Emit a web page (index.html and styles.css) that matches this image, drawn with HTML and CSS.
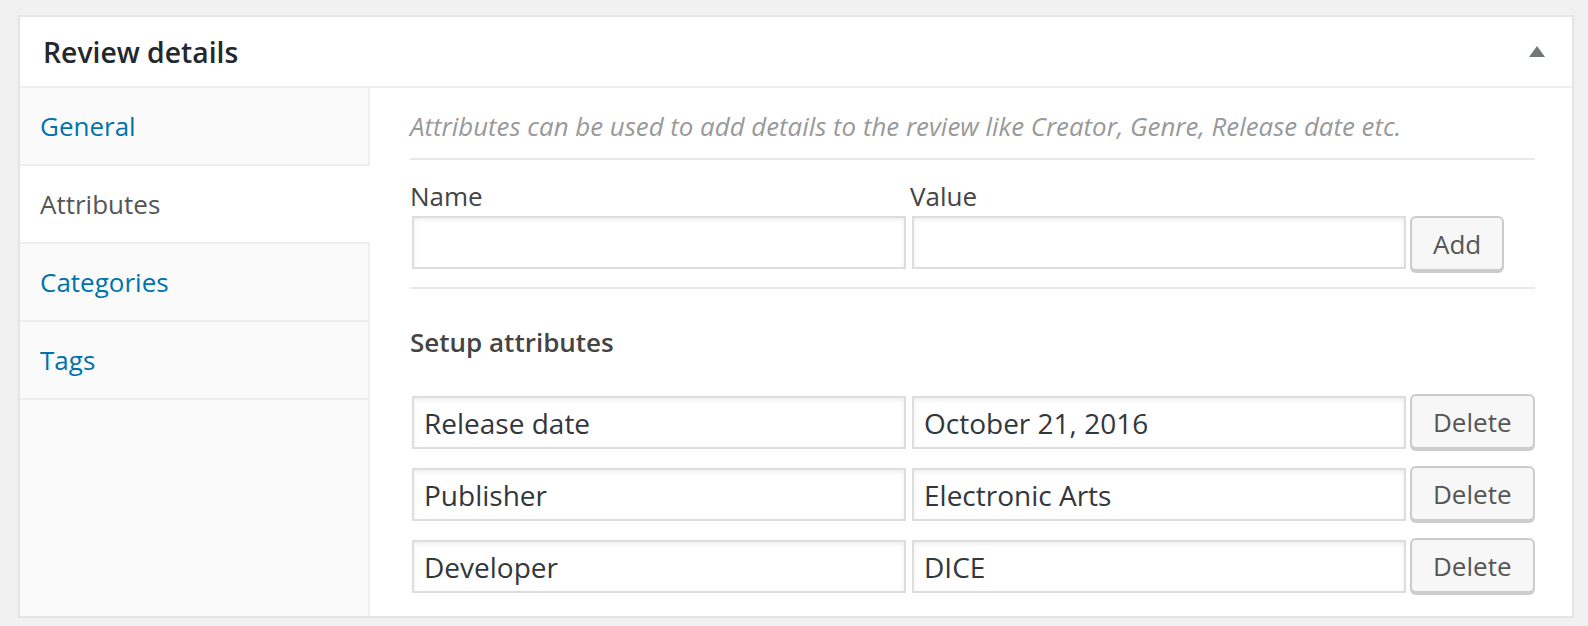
FILE: index.html
```html
<!DOCTYPE html>
<html lang="en">
<head>
<meta charset="utf-8">
<title>Review details</title>
<link rel="stylesheet" href="styles.css">
</head>
<body>
<div class="postbox">
  <div class="hndle">
    <h2>Review details</h2>
    <svg class="toggle" width="16" height="11" viewBox="0 0 16 11"><polygon points="8,0 16,11 0,11" fill="#72777c"/></svg>
  </div>
  <div class="inside">
    <ul class="tabs">
      <li class="tab">General</li>
      <li class="tab active">Attributes</li>
      <li class="tab">Categories</li>
      <li class="tab">Tags</li>
    </ul>
    <div class="content">
      <p class="description">Attributes can be used to add details to the review like Creator, Genre, Release date etc.</p>
      <div class="sep"></div>
      <div class="labels">
        <span class="label label-name">Name</span>
        <span class="label">Value</span>
      </div>
      <div class="row row-new">
        <input class="field field-name" type="text" value="">
        <input class="field field-value" type="text" value="">
        <button class="btn">Add</button>
      </div>
      <div class="sep sep-lower"></div>
      <h3 class="setup-title">Setup attributes</h3>
      <div class="row row-first">
        <input class="field field-name" type="text" value="Release date">
        <input class="field field-value" type="text" value="October 21, 2016">
        <button class="btn">Delete</button>
      </div>
      <div class="row">
        <input class="field field-name" type="text" value="Publisher">
        <input class="field field-value" type="text" value="Electronic Arts">
        <button class="btn">Delete</button>
      </div>
      <div class="row">
        <input class="field field-name" type="text" value="Developer">
        <input class="field field-value" type="text" value="DICE">
        <button class="btn">Delete</button>
      </div>
    </div>
  </div>
</div>
</body>
</html>
```
FILE: styles.css
```css
html, body {
  margin: 0;
  padding: 0;
  background: #f1f1f1;
  font-family: "Open Sans", "Noto Sans", sans-serif;
}

.postbox {
  margin: 15px 0 0 18px;
  width: 1556px;
  box-sizing: border-box;
  border: 2px solid #e5e5e5;
  background: #fff;
  box-shadow: 0 2px 2px rgba(0, 0, 0, 0.04);
}

.hndle {
  height: 69px;
  border-bottom: 2px solid #eee;
  display: flex;
  align-items: center;
  justify-content: space-between;
  padding: 0 27px 0 23px;
}

.hndle h2 {
  margin: 0;
  font-size: 28.3px;
  font-weight: 600;
  color: #23282d;
  line-height: 40px;
}

.toggle {
  display: block;
}

.inside {
  display: flex;
}

.tabs {
  list-style: none;
  margin: 0;
  padding: 0;
  width: 350px;
  flex: none;
  background: #fafafa;
  box-shadow: inset -2px 0 0 #eee;
}

.tab {
  height: 76px;
  border-bottom: 2px solid #eee;
  display: flex;
  align-items: center;
  padding-left: 20px;
  font-size: 26px;
  color: #0073aa;
}

.tab.active {
  background: #fff;
  color: #555;
}

.content {
  flex: 1;
  padding: 18px 40px 23px 40px;
}

.description {
  margin: 0;
  font-size: 25.85px;
  line-height: 40px;
  font-style: italic;
  color: #999;
}

.sep {
  height: 2px;
  background: #e8e8e8;
  margin-top: 12px;
}

.sep-lower {
  margin-top: 16px;
}

.labels {
  display: flex;
  margin-top: 16px;
  font-size: 26px;
  line-height: 40px;
  color: #444;
}

.label-name {
  width: 500px;
}

.row {
  display: flex;
  align-items: flex-end;
  padding-left: 2px;
  margin-top: 17px;
}

.row-new {
  align-items: flex-start;
  margin-top: 0;
}

.row-first {
  margin-top: 32px;
}

.field {
  width: 494px;
  height: 53px;
  box-sizing: border-box;
  border: 2px solid #ddd;
  box-shadow: inset 0 2px 4px rgba(0, 0, 0, 0.07);
  background: #fff;
  padding: 0 10px;
  margin: 0 6px 0 0;
  font-family: "Open Sans", "Noto Sans", sans-serif;
  font-size: 28px;
  color: #32373c;
  outline: none;
  border-radius: 0;
}

.field-value {
  margin-right: 4px;
}

.btn {
  height: 55px;
  box-sizing: border-box;
  border: 2px solid #ccc;
  border-radius: 6px;
  background: #f7f7f7;
  box-shadow: 0 2px 0 #ccc;
  color: #555;
  font-family: "Open Sans", "Noto Sans", sans-serif;
  font-size: 26px;
  line-height: 1;
  padding: 0 21px;
  margin: 0;
}

.setup-title {
  margin: 33px 0 0 0;
  font-size: 26px;
  line-height: 40px;
  font-weight: 600;
  color: #444;
}
```
